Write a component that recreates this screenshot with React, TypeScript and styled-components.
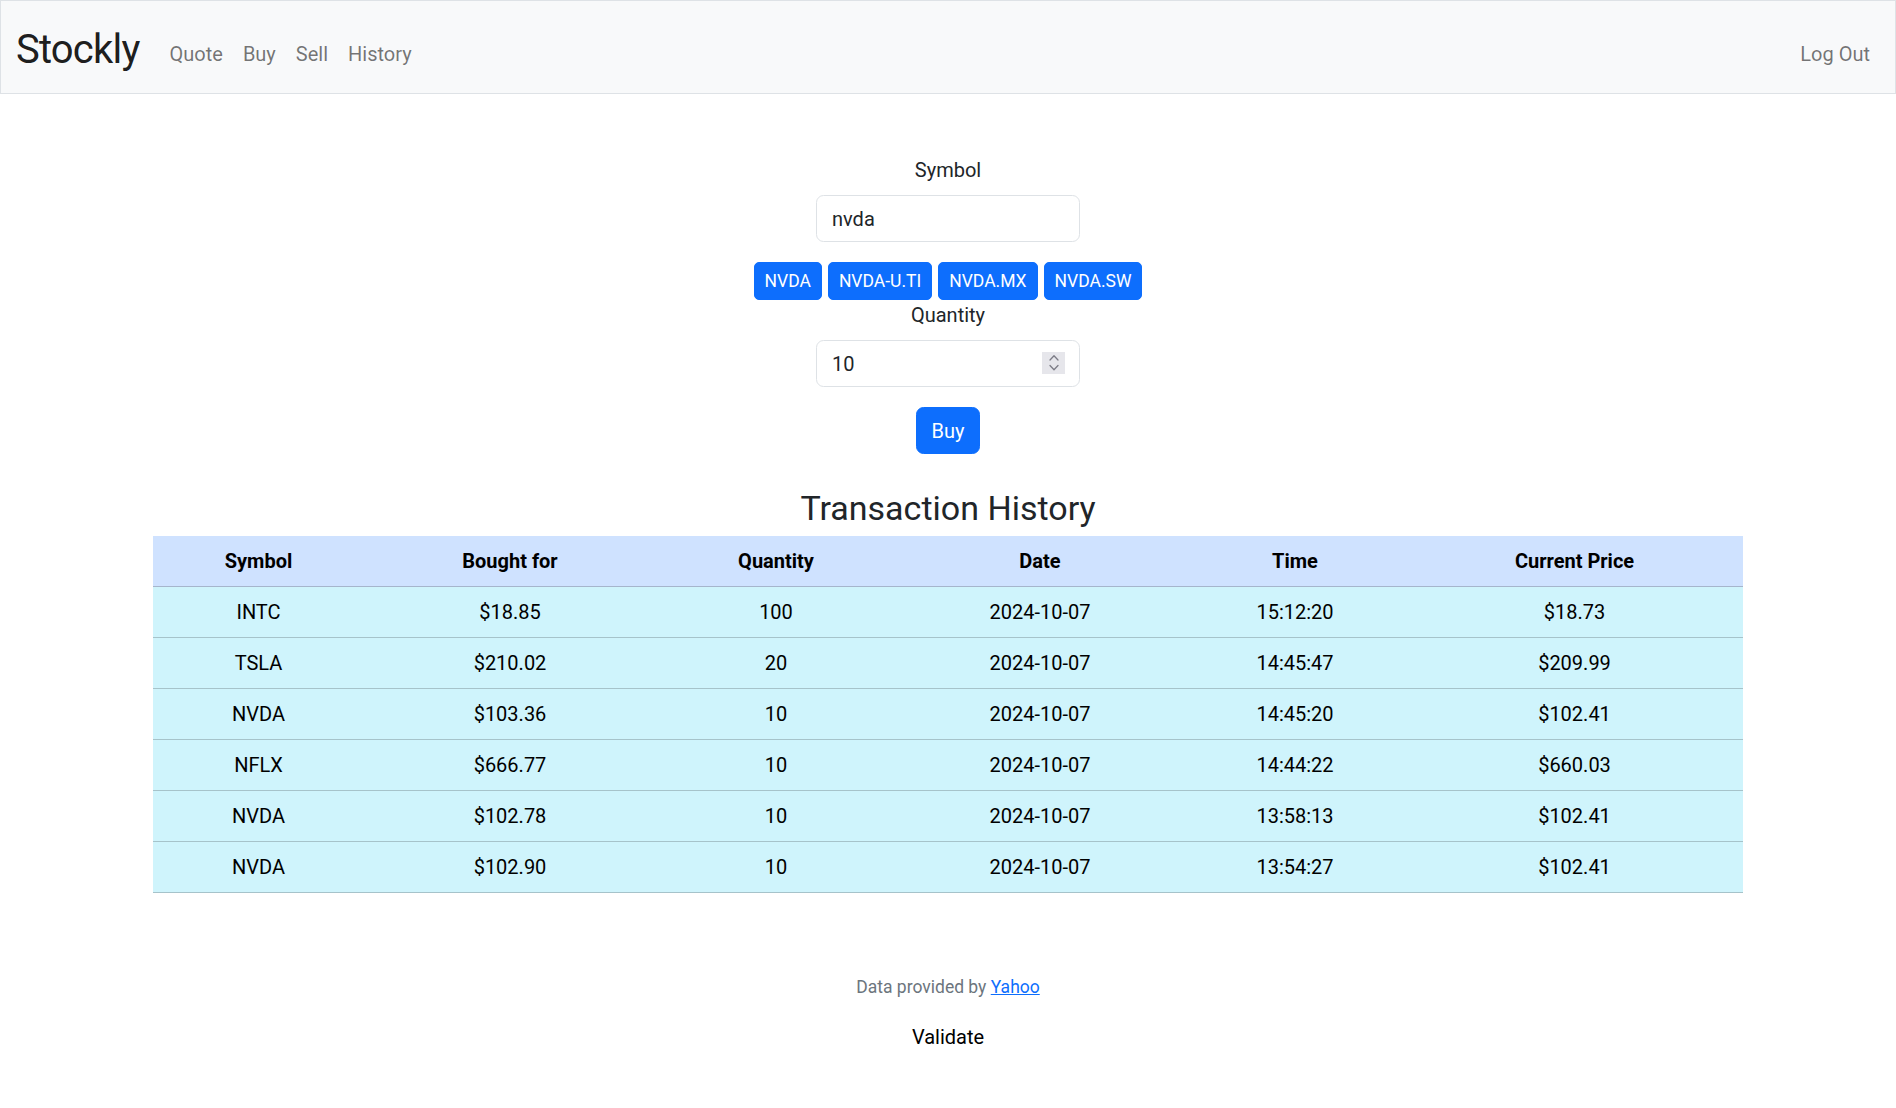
import React from "react";
import styled, { createGlobalStyle } from "styled-components";

const GlobalStyle = createGlobalStyle`
  *, *::before, *::after { box-sizing: border-box; }
  html, body { margin: 0; padding: 0; }
  body {
    font-family: Roboto, "Noto Sans", "Liberation Sans", sans-serif;
    font-size: 20px;
    line-height: 1.5;
    color: #212529;
    background: #ffffff;
  }
`;

const Navbar = styled.nav`
  display: flex;
  align-items: center;
  justify-content: space-between;
  background: #f8f9fa;
  border: 1px solid #dee2e6;
  padding: 10px 15px;
`;

const NavLeft = styled.div`
  display: flex;
  align-items: center;
`;

const Brand = styled.a`
  font-size: 40px;
  line-height: 60px;
  letter-spacing: -0.8px;
  padding: 9px 0 3px;
  margin-right: 20px;
  color: rgba(0, 0, 0, 0.9);
  text-decoration: none;
`;

const NavList = styled.ul`
  display: flex;
  list-style: none;
  margin: 0;
  padding: 14px 0 0;
`;

const NavLink = styled.a<{ $offset?: number }>`
  display: block;
  padding: 10px;
  margin-top: ${(p) => p.$offset ?? 0}px;
  font-size: 20px;
  line-height: 30px;
  color: rgba(0, 0, 0, 0.55);
  text-decoration: none;
`;

const Main = styled.main`
  padding: 61px 15px 60px;
  text-align: center;
`;

const Form = styled.form`
  display: flex;
  flex-direction: column;
  align-items: center;
`;

const FieldGroup = styled.div<{ $mb: number }>`
  display: flex;
  flex-direction: column;
  align-items: center;
  margin-bottom: ${(p) => p.$mb}px;
`;

const Label = styled.label`
  display: block;
  margin-bottom: 10px;
  line-height: 30px;
`;

const InputWrap = styled.div`
  position: relative;
  width: 264px;
`;

const TextInput = styled.input`
  display: block;
  width: 264px;
  height: 47px;
  padding: 7.5px 15px;
  font-family: inherit;
  font-size: 20px;
  line-height: 30px;
  color: #212529;
  background: #fff;
  border: 1px solid #dee2e6;
  border-radius: 7.5px;
  outline: none;
  -moz-appearance: textfield;
  &::-webkit-inner-spin-button,
  &::-webkit-outer-spin-button {
    -webkit-appearance: none;
    margin: 0;
  }
`;

const Spinner = styled.span`
  position: absolute;
  right: 15px;
  top: 12px;
  width: 23px;
  height: 22px;
  background: #e6e6eb;
  display: flex;
  align-items: center;
  justify-content: center;
`;

const Suggestions = styled.div`
  display: flex;
  justify-content: center;
  gap: 6px;
`;

const SmallButton = styled.button`
  font-family: inherit;
  font-size: 17.5px;
  line-height: 26px;
  padding: 5px 10px;
  color: #fff;
  background: #0d6efd;
  border: 1px solid #0d6efd;
  border-radius: 5px;
  cursor: pointer;
`;

const PrimaryButton = styled.button`
  font-family: inherit;
  font-size: 20px;
  line-height: 30px;
  padding: 7.5px 15px;
  color: #fff;
  background: #0d6efd;
  border: 1px solid #0d6efd;
  border-radius: 7.5px;
  cursor: pointer;
`;

const Heading = styled.h3`
  font-size: 34px;
  font-weight: 400;
  line-height: 42px;
  margin: 33px 0 7px;
  color: #212529;
`;

const Table = styled.table`
  width: 1590px;
  margin: 0 auto 20px;
  border-collapse: collapse;
  table-layout: fixed;
`;

const Col = styled.col<{ $w: number }>`
  width: ${(p) => p.$w}px;
`;

const HeadCell = styled.th`
  padding: 10px;
  line-height: 30px;
  font-weight: 700;
  color: #000;
  background: #cfe2ff;
  border-bottom: 1px solid #a6b5cc;
`;

const Cell = styled.td`
  padding: 10px;
  line-height: 30px;
  color: #000;
  background: #cff4fc;
  border-bottom: 1px solid #a6c3ca;
`;

const Footer = styled.footer`
  font-size: 17.5px;
  line-height: 26px;
  color: #6c757d;
  text-align: center;
  padding-top: 1px;
  margin-bottom: 22px;
`;

const FooterLink = styled.a`
  color: #0d6efd;
  text-decoration: underline;
`;

const Validate = styled.div`
  text-align: center;
  line-height: 30px;
  color: #000;
`;

const columns = [
  { name: "Symbol", w: 211 },
  { name: "Bought for", w: 292 },
  { name: "Quantity", w: 240 },
  { name: "Date", w: 288 },
  { name: "Time", w: 222 },
  { name: "Current Price", w: 337 },
];

const rows = [
  ["INTC", "$18.85", "100", "2024-10-07", "15:12:20", "$18.73"],
  ["TSLA", "$210.02", "20", "2024-10-07", "14:45:47", "$209.99"],
  ["NVDA", "$103.36", "10", "2024-10-07", "14:45:20", "$102.41"],
  ["NFLX", "$666.77", "10", "2024-10-07", "14:44:22", "$660.03"],
  ["NVDA", "$102.78", "10", "2024-10-07", "13:58:13", "$102.41"],
  ["NVDA", "$102.90", "10", "2024-10-07", "13:54:27", "$102.41"],
];

const suggestions = ["NVDA", "NVDA-U.TI", "NVDA.MX", "NVDA.SW"];

export default function App() {
  return (
    <>
      <GlobalStyle />
      <Navbar>
        <NavLeft>
          <Brand href="#">Stockly</Brand>
          <NavList>
            {["Quote", "Buy", "Sell", "History"].map((l) => (
              <li key={l}>
                <NavLink href="#">{l}</NavLink>
              </li>
            ))}
          </NavList>
        </NavLeft>
        <NavLink href="#" $offset={14}>
          Log Out
        </NavLink>
      </Navbar>
      <Main>
        <Form onSubmit={(e) => e.preventDefault()}>
          <FieldGroup $mb={20}>
            <Label htmlFor="symbol">Symbol</Label>
            <TextInput id="symbol" type="text" defaultValue="nvda" />
          </FieldGroup>
          <Suggestions>
            {suggestions.map((s) => (
              <SmallButton type="button" key={s}>
                {s}
              </SmallButton>
            ))}
          </Suggestions>
          <FieldGroup $mb={20}>
            <Label htmlFor="qty">Quantity</Label>
            <InputWrap>
              <TextInput id="qty" type="number" defaultValue="10" />
              <Spinner>
                <svg width="10" height="18" viewBox="0 0 10 18" fill="none" stroke="#7c7c86" strokeWidth="1.3" strokeLinecap="round" strokeLinejoin="round">
                  <polyline points="1,6 5,1.8 9,6" />
                  <polyline points="1,11.5 5,15.7 9,11.5" />
                </svg>
              </Spinner>
            </InputWrap>
          </FieldGroup>
          <PrimaryButton type="submit">Buy</PrimaryButton>
        </Form>
        <Heading>Transaction History</Heading>
        <Table>
          <colgroup>
            {columns.map((c) => (
              <Col key={c.name} $w={c.w} />
            ))}
          </colgroup>
          <thead>
            <tr>
              {columns.map((c) => (
                <HeadCell key={c.name}>{c.name}</HeadCell>
              ))}
            </tr>
          </thead>
          <tbody>
            {rows.map((r, i) => (
              <tr key={i}>
                {r.map((v, j) => (
                  <Cell key={j}>{v}</Cell>
                ))}
              </tr>
            ))}
          </tbody>
        </Table>
      </Main>
      <Footer>
        Data provided by <FooterLink href="#">Yahoo</FooterLink>
      </Footer>
      <Validate>Validate</Validate>
    </>
  );
}
